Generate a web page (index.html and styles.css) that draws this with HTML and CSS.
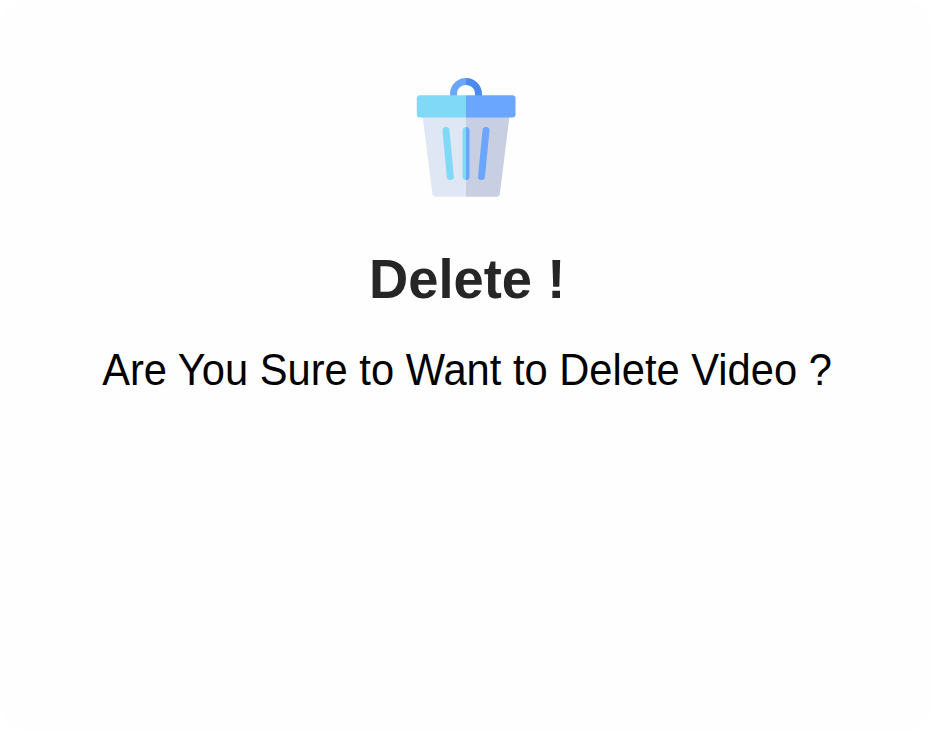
FILE: index.html
```html
<!DOCTYPE html>
<html lang="en">
<head>
<meta charset="utf-8">
<title>Delete</title>
<link rel="stylesheet" href="styles.css">
</head>
<body>
<main class="dialog">
  <svg class="trash" viewBox="0 0 100 120" width="100" height="120" aria-hidden="true">
    <path fill="#6ba6fe" d="M50 0C41 0 34 7 34 16V19H41V16C41 10.500 45 7 50 7Z"/>
    <path fill="#4b8aec" d="M50 0C59 0 66 7 66 16V19H59V16C59 10.500 55 7 50 7Z"/>
    <path fill="#dfe7f4" d="M6.500 38L16.400 116.300Q16.800 118.700 19.500 118.700H50V38Z"/>
    <path fill="#c8cfe2" d="M93.500 38L83.800 116.300Q83.400 118.700 81 118.700H50V38Z"/>
    <path fill="#80d9f6" d="M50 17.200H4Q.8 17.200 .8 20.400V36.300Q.8 39.500 4 39.500H50Z"/>
    <path fill="#6ba6fe" d="M50 17.200H96.300Q99.500 17.200 99.500 20.400V36.300Q99.500 39.500 96.300 39.500H50Z"/>
    <path class="slot slot-left" d="M30 52.500L34.300 98.500"/>
    <path class="slot slot-right" d="M70 52.500L65.500 98.500"/>
    <path fill="#80d9f6" d="M50 49Q46.500 49 46.500 52.500V98.500Q46.500 102 50 102Z"/>
    <path fill="#6ba6fe" d="M50 49Q53.500 49 53.500 52.500V98.500Q53.500 102 50 102Z"/>
  </svg>
  <h1 class="title">Delete !</h1>
  <p class="message">Are You Sure to Want to Delete Video ?</p>
</main>
</body>
</html>
```
FILE: styles.css
```css
body {
  margin: 0;
  background: #fff;
}

.dialog {
  box-sizing: border-box;
  height: 732px;
  padding-top: 78px;
  display: flex;
  flex-direction: column;
  align-items: center;
  border-radius: 28px;
  background: #fefefe;
  font-family: "Liberation Sans", Arial, sans-serif;
}

.trash {
  display: block;
}

.slot {
  fill: none;
  stroke-width: 7;
  stroke-linecap: round;
}

.slot-left {
  stroke: #80d9f6;
}

.slot-right {
  stroke: #6ba6fe;
}

.title {
  margin: 49px 0 0 2px;
  color: #262626;
  font-size: 56px;
  line-height: 64px;
  font-weight: 700;
  transform: scaleX(0.97);
}

.message {
  margin: 33px 0 0 2px;
  color: #000;
  font-size: 45px;
  line-height: 52px;
  white-space: nowrap;
  transform: scaleX(0.926);
}
```
